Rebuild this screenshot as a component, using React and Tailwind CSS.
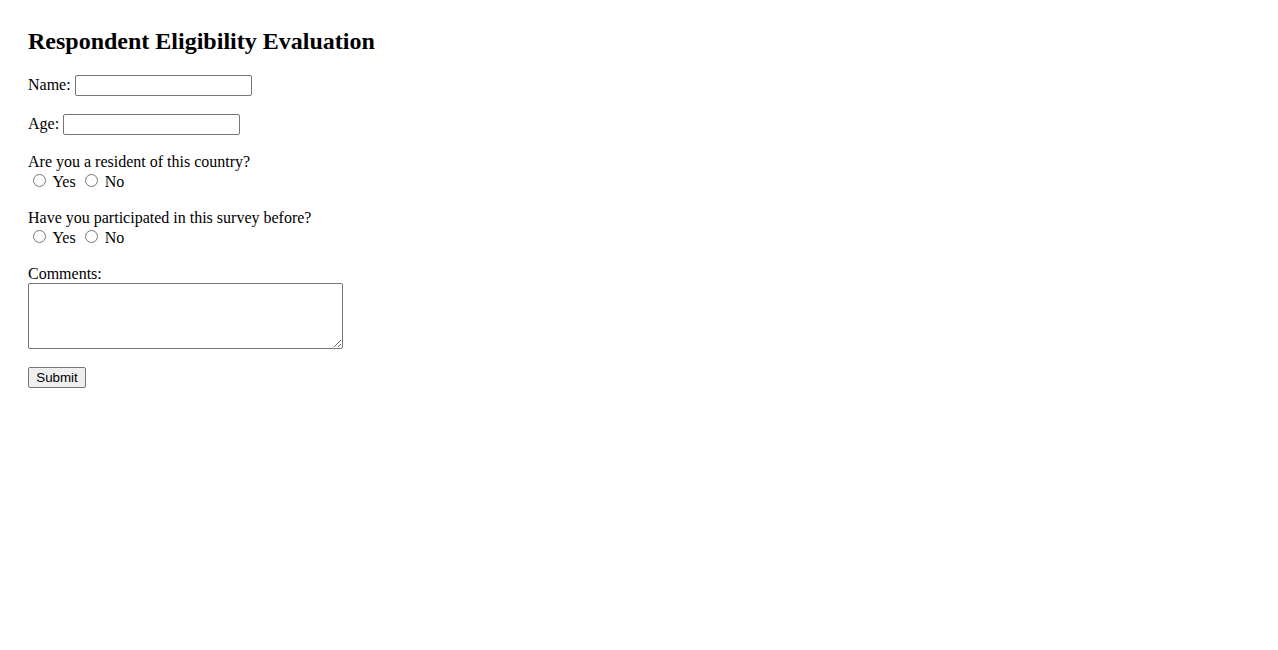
export default function App() {
  const inputCls =
    "w-[177px] h-[21px] border border-[#767676] rounded-[2px] px-[3px] py-[2px] text-[13.33px] font-['Arial','Liberation_Sans',sans-serif] align-baseline";
  const radioCls = "m-[3px_3px_0px_5px] align-baseline";
  return (
    <div className="bg-white min-h-[650px] px-[28px] pt-[28px] text-black text-[16px] leading-[normal] font-['Liberation_Serif','Times_New_Roman',serif]">
      <h2 className="text-[24px] font-bold leading-[normal] mb-[20px]">
        Respondent Eligibility Evaluation
      </h2>
      <div className="mb-[18px]">
        <label>Name: </label>
        <input type="text" className={inputCls} />
      </div>
      <div className="mb-[18px]">
        <label>Age: </label>
        <input type="text" className={inputCls} />
      </div>
      <div className="mb-[18px]">
        <label>Are you a resident of this country?</label>
        <br />
        <input type="radio" name="resident" className={radioCls} /> Yes{" "}
        <input type="radio" name="resident" className={radioCls} /> No
      </div>
      <div className="mb-[18px]">
        <label>Have you participated in this survey before?</label>
        <br />
        <input type="radio" name="participated" className={radioCls} /> Yes{" "}
        <input type="radio" name="participated" className={radioCls} /> No
      </div>
      <div className="mb-[18px]">
        <label>Comments:</label>
        <textarea className="block w-[315px] h-[66px] border border-[#767676] rounded-[2px] p-[2px] text-[13.33px] font-['Liberation_Mono',monospace]" />
      </div>
      <button
        type="button"
        className="w-[58px] bg-[#efefef] border border-[#767676] rounded-[2px] px-[7px] py-[2px] text-[13.33px] leading-[normal] font-['Arial','Liberation_Sans',sans-serif] text-black"
      >
        Submit
      </button>
    </div>
  );
}
